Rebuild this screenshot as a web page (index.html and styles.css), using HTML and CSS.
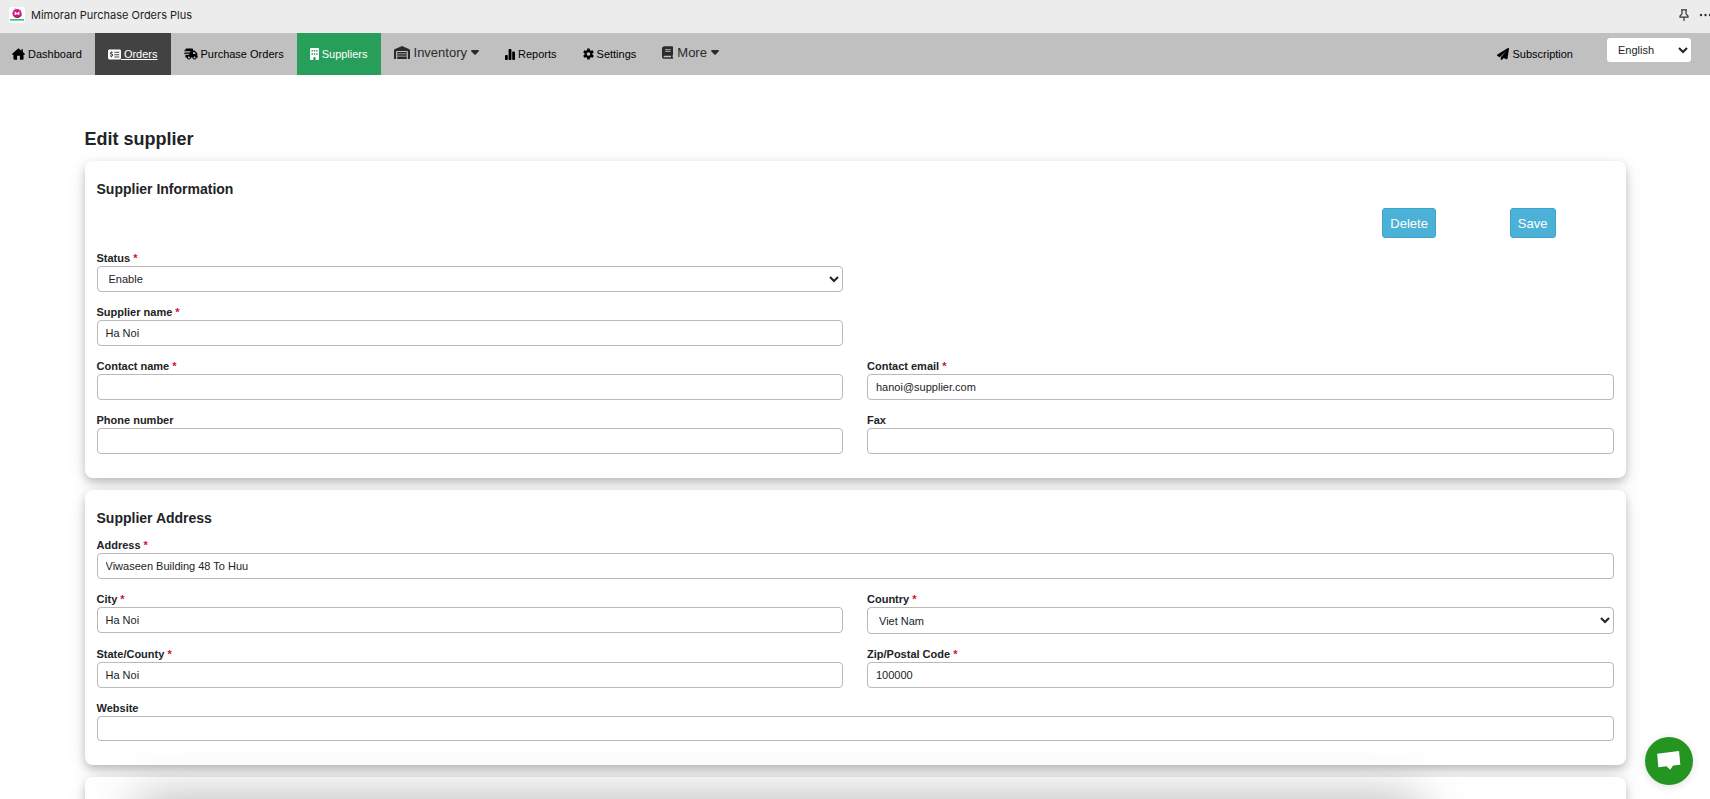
FILE: index.html
```html
<!DOCTYPE html>
<html lang="en">
<head>
<meta charset="utf-8">
<title>Mimoran Purchase Orders Plus</title>
<link rel="stylesheet" href="styles.css">
</head>
<body>
<header class="appbar">
  <svg class="logo" viewBox="0 0 16 16" aria-hidden="true"><rect width="16" height="16" rx="3" fill="#fff"/><circle cx="8" cy="6.500" r="4.500" fill="#d4147f"/><path d="M5 9a4.500 4.500 0 0 0 7.500-3.500V9L9 11z" fill="#7d1d6c"/><path d="M6.300 8V5.500L8 7l1.800-1.500V8" fill="none" stroke="#fff" stroke-width="1.200"/><path d="M5 2.500l2-1 1 1" fill="none" stroke="#f0a0cc"/><path d="M1 12.800h14" stroke="#35c46b" stroke-width="1.600"/></svg>
  <span class="appname">Mimoran Purchase Orders Plus</span>
  <div class="appactions">
    <button type="button" aria-label="Pin"><svg width="10" height="12" viewBox="0 0 10 12" fill="none" stroke="#333" stroke-width="1.200"><path d="M2 .8h6M3 1v3.800L1 7v1.200h8V7L7 4.800V1M5 8.200V12"/></svg></button>
    <button type="button" aria-label="More actions"><svg width="12" height="12" viewBox="0 0 12 12" fill="#333"><circle cx="2" cy="6" r="1.200"/><circle cx="6.500" cy="6" r="1.200"/><circle cx="11" cy="6" r="1.200"/></svg></button>
  </div>
</header>

<nav class="nav">
  <a href="#" class="item"><svg width="13" height="12" viewBox="0 0 576 512"><path d="M288 0 8 250c-16 15-6 38 16 38h40v170c0 32 22 54 54 54h106V350c0-12 8-20 20-20h88c12 0 20 8 20 20v162h106c32 0 54-22 54-54V288h40c22 0 32-23 16-38L480 165V48h-64v60z"/></svg>Dashboard</a>
  <a href="#" class="item hovered"><svg width="13" height="11" viewBox="0 0 576 448"><path fill-rule="evenodd" d="M64 0h448c35 0 64 29 64 64v320c0 35-29 64-64 64H64c-35 0-64-29-64-64V64C0 29 29 0 64 0zm216 100v44h220v-44zm0 108v44h220v-44zm0 108v44h220v-44zM136 84v30c-70 10-64 92-8 112 34 12 62 14 58 34-4 18-50 14-88 0l-14 42c18 8 34 12 52 14v32h40v-32c76-14 78-104 6-126-40-12-54-16-52-30 4-16 42-12 74-4l12-42c-14-4-26-6-40-8V84z"/></svg><span class="underlined"> Orders</span></a>
  <a href="#" class="item"><svg width="14" height="12" viewBox="0 0 640 512"><path fill-rule="evenodd" d="M112 0h256c26 0 48 22 48 48v48h64l128 128v144h32v48h-64a96 96 0 0 1-192 0h-64a96 96 0 0 1-192 0H64V288h168v-32H0v-32h264v-32H32v-32h264v-32H0V96h64V48C64 22 86 0 112 0zm304 160v96h128v-14l-82-82zM224 368a48 48 0 1 0 0 96 48 48 0 0 0 0-96zm256 0a48 48 0 1 0 0 96 48 48 0 0 0 0-96z"/></svg>Purchase Orders</a>
  <a href="#" class="item current" aria-current="page"><svg width="9" height="12" viewBox="0 0 384 512"><path fill-rule="evenodd" d="M48 0h288c26 0 48 22 48 48v416c0 26-22 48-48 48h-96v-80c0-60-96-60-96 0v80H48c-26 0-48-22-48-48V48C0 22 22 0 48 0zm16 80v64h60V80zm98 0v64h60V80zm98 0v64h60V80zM64 220v64h60v-64zm98 0v64h60v-64zm98 0v64h60v-64z"/></svg>Suppliers</a>
  <button type="button" class="item menu"><svg width="16" height="13" viewBox="0 0 640 512"><path d="M0 512V172c0-26 16-50 40-60L302 4c12-5 24-5 36 0l262 108c24 10 40 34 40 60v340h-84V224c0-18-14-32-32-32H116c-18 0-32 14-32 32v288zM128 236h384v56H128zm0 90h384v56H128zm0 90h384v96H128z"/></svg><span>Inventory</span><svg width="8" height="5" viewBox="0 0 8 5"><path d="M1 0h6q1 0 1 1L4.500 4.800h-1L0 1q0-1 1-1z"/></svg></button>
  <a href="#" class="item"><svg width="10" height="11" viewBox="0 0 10 11"><rect y="6" width="2.800" height="5" rx=".8"/><rect x="3.600" width="2.800" height="11" rx=".8"/><rect x="7.200" y="2.500" width="2.800" height="8.500" rx=".8"/></svg>Reports</a>
  <a href="#" class="item"><svg width="11" height="12" viewBox="0 0 24 24"><path fill-rule="evenodd" d="M9.500 0h5l.7 3.700 2.300 1.300 3.600-1.300 2.500 4.300-2.900 2.500v3l2.900 2.500-2.500 4.300-3.600-1.300-2.300 1.300-.7 3.700h-5l-.7-3.700L6.500 19l-3.600 1.300L.4 16l2.900-2.500v-3L.4 8l2.500-4.300L6.500 5l2.300-1.300zM12 8a4 4 0 1 0 0 8 4 4 0 0 0 0-8z"/></svg>Settings</a>
  <button type="button" class="item menu"><svg width="11" height="13" viewBox="0 0 448 512"><path fill-rule="evenodd" d="M96 0h320c18 0 32 14 32 32v320c0 12-6 22-16 28v68h16v64H96c-53 0-96-43-96-96V96C0 43 43 0 96 0zm0 384c-42 0-42 64 0 64h272v-64zm32-256v36h224v-36zm0 72v36h224v-36z"/></svg><span>More</span><svg width="8" height="5" viewBox="0 0 8 5"><path d="M1 0h6q1 0 1 1L4.500 4.800h-1L0 1q0-1 1-1z"/></svg></button>
  <a href="#" class="item subscription"><svg width="12" height="12" viewBox="0 0 512 512"><path d="M498 6c10 7 16 18 14 30l-64 416c-3 22-24 32-44 24l-120-50-68 74c-20 22-56 8-56-22v-84l242-264-292 260-90-46c-26-14-26-50 0-64L466 4c10-6 22-5 32 2z"/></svg>Subscription</a>
  <select class="language" aria-label="Language"><option>English</option></select>
</nav>

<main class="page">
  <h1>Edit supplier</h1>

  <section class="card">
    <h2>Supplier Information</h2>
    <div class="buttons"><button type="button" class="btn">Delete</button><button type="button" class="btn">Save</button></div>
    <div class="fields">
      <div class="field first-col"><label for="status">Status <b class="req">*</b></label><select id="status"><option>Enable</option></select></div>
      <div class="field first-col"><label for="sname">Supplier name <b class="req">*</b></label><input id="sname" type="text" value="Ha Noi"></div>
      <div class="field first-col"><label for="cname">Contact name <b class="req">*</b></label><input id="cname" type="text"></div>
      <div class="field"><label for="email">Contact email <b class="req">*</b></label><input id="email" type="email" value="hanoi@supplier.com"></div>
      <div class="field"><label for="phone">Phone number</label><input id="phone" type="tel"></div>
      <div class="field"><label for="fax">Fax</label><input id="fax" type="tel"></div>
    </div>
  </section>

  <section class="card">
    <h2>Supplier Address</h2>
    <div class="fields">
      <div class="field wide"><label for="address">Address <b class="req">*</b></label><input id="address" type="text" value="Viwaseen Building 48 To Huu"></div>
      <div class="field"><label for="city">City <b class="req">*</b></label><input id="city" type="text" value="Ha Noi"></div>
      <div class="field"><label for="country">Country <b class="req">*</b></label><select id="country" class="tall"><option>Viet Nam</option></select></div>
      <div class="field"><label for="state">State/County <b class="req">*</b></label><input id="state" type="text" value="Ha Noi"></div>
      <div class="field"><label for="zip">Zip/Postal Code <b class="req">*</b></label><input id="zip" type="text" value="100000"></div>
      <div class="field wide"><label for="website">Website</label><input id="website" class="short" type="url"></div>
    </div>
  </section>

  <section class="card next"></section>
</main>

<div class="dock-shadow"></div>
<button type="button" class="chat" aria-label="Open chat"><svg width="24" height="20" viewBox="0 0 26 22"><path d="M0 3 24 0l1.500 15-8 .9-3.200 4.600-4-3.600L1.300 18z" fill="#fff"/></svg></button>
</body>
</html>
```
FILE: styles.css
```css
* { box-sizing: border-box; }
html { scrollbar-width: none; }
body {
  margin: 0;
  background: #fff;
  color: #212326;
  font-family: "Liberation Sans", Arial, sans-serif;
  font-size: 11px;
}
button, input, select { font: inherit; color: inherit; }
button { border: 0; background: none; padding: 0; cursor: pointer; }

.appbar {
  display: flex;
  align-items: center;
  height: 33px;
  padding: 0 0 3px 9px;
  background: #ececec;
  overflow: hidden;
}
.logo { width: 16px; height: 16px; margin-right: 6px; }
.appname { font: 11px Inter, sans-serif; color: #222; }
.appactions { display: flex; gap: 10px; margin-left: auto; margin-right: -1px; }
.appactions button { display: flex; }

.nav {
  display: flex;
  height: 42px;
  padding-right: 19px;
  background: #c0c0c0;
}
.item {
  display: flex;
  align-items: center;
  gap: 3px;
  padding: 0 13px;
  color: #000;
  text-decoration: none;
  white-space: nowrap;
}
.item:first-child { padding-left: 12px; }
.item svg { fill: currentColor; flex: none; }
.hovered { background: #424242; color: #fff; gap: 0; }
.underlined { text-decoration: underline; white-space: pre; }
.current { background: #289e5b; color: #fff; }
.menu { color: #2b2b2b; font-size: 13px; gap: 4px; padding-bottom: 4px; }
.subscription { margin-left: auto; margin-right: 21px; }
.language {
  width: 84px;
  height: 24px;
  margin-top: 5px;
  padding-left: 7px;
  border: 0;
  border-radius: 3px;
  background: #fff;
}

.page { padding: 0 calc(5% - 1px); }
h1 { margin: 52px 0 10px; font-size: 18px; line-height: 24px; }
h2 { margin: 0 0 9px; font-size: 14px; line-height: 20px; }
.card {
  margin-bottom: 12px;
  padding: 18px 12px 24px;
  border-radius: 8px;
  background: #fff;
  box-shadow: 0 4px 8px rgba(0, 0, 0, .2), 0 6px 20px rgba(0, 0, 0, .1);
}
.buttons {
  display: flex;
  justify-content: flex-end;
  gap: 74px;
  padding: 0 58px 12px 0;
}
.btn {
  height: 30px;
  padding: 0 7px;
  border: 1px solid #3ba6cb;
  border-radius: 3px;
  background: #4cb1d6;
  color: #fff;
  font-size: 13px;
}
.fields {
  display: grid;
  grid-template-columns: 1fr 1fr;
  gap: 12px 24px;
}
.field { display: flex; flex-direction: column; }
.first-col { grid-column-start: 1; }
.wide { grid-column: 1 / -1; }
.field label { font-weight: bold; line-height: 16px; }
.req { color: #d0112b; }
.field input, .field select {
  width: 100%;
  height: 26px;
  padding: 0 8px;
  border: 1px solid #b9b9b9;
  border-radius: 4px;
  background: #fff;
}
.field select { padding: 0 0 0 7px; }
.field .tall { height: 27px; }
.field .short { height: 25px; }
.next { min-height: 120px; margin: 0; }

.dock-shadow {
  position: fixed;
  left: 8%;
  right: 17%;
  top: 100%;
  height: 60px;
  box-shadow: 0 0 50px rgba(0, 0, 0, .3);
}
.chat {
  position: fixed;
  right: 17px;
  bottom: 14px;
  display: flex;
  align-items: center;
  justify-content: center;
  width: 48px;
  height: 48px;
  border-radius: 50%;
  background: #259522;
  box-shadow: 0 2px 8px rgba(0, 0, 0, .12);
}
```
